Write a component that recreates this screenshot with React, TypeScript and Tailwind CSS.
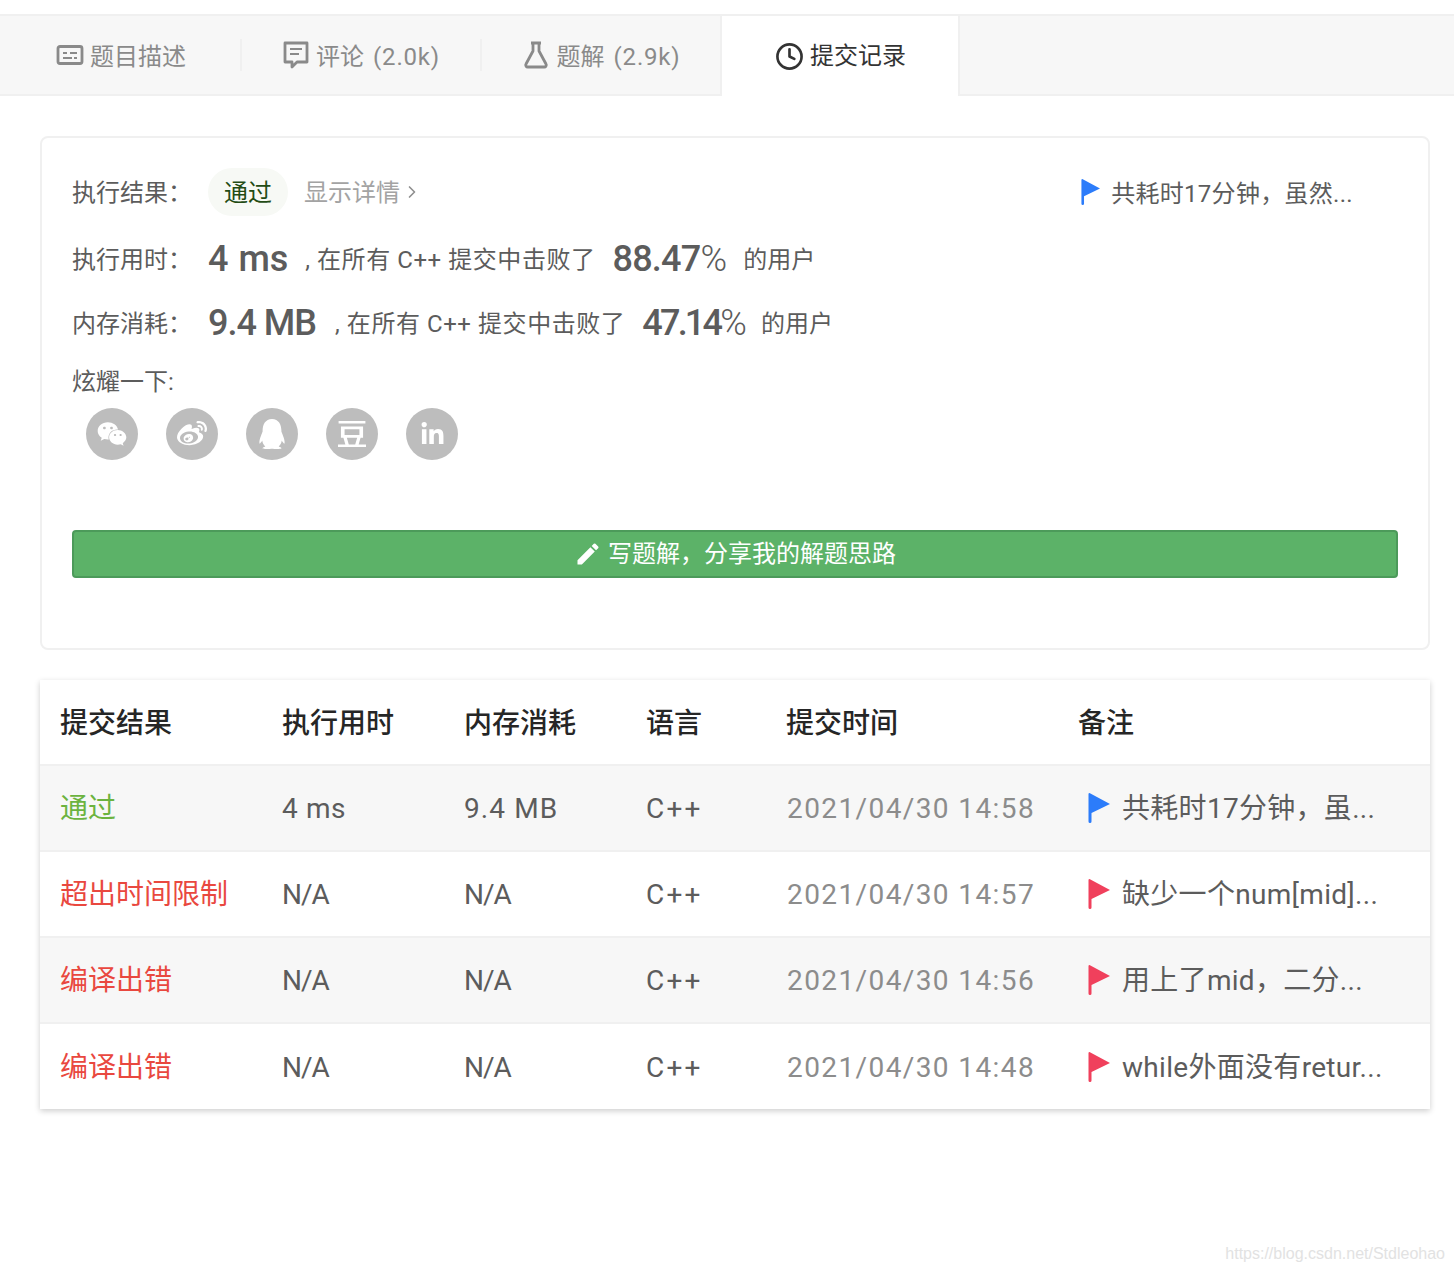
import { Clock, ChevronRight } from "lucide-react";
import { FaWeixin, FaWeibo, FaLinkedinIn } from "react-icons/fa";
import { SiDouban, SiTencentqq } from "react-icons/si";
import { MdEdit } from "react-icons/md";

const rows = [
  { status: "通过", color: "text-[#6cb33f]", time: "4 ms", mem: "9.4 MB", date: "2021/04/30 14:58", note: "共耗时17分钟，虽...", flag: "#2c7cfa" },
  { status: "超出时间限制", color: "text-[#e9483f]", time: "N/A", mem: "N/A", date: "2021/04/30 14:57", note: "缺少一个num[mid]...", flag: "#f0405c" },
  { status: "编译出错", color: "text-[#e9483f]", time: "N/A", mem: "N/A", date: "2021/04/30 14:56", note: "用上了mid，二分...", flag: "#f0405c" },
  { status: "编译出错", color: "text-[#e9483f]", time: "N/A", mem: "N/A", date: "2021/04/30 14:48", note: "while外面没有retur...", flag: "#f0405c" },
];

function Flag({ color, className }: { color: string; className: string }) {
  return (
    <svg viewBox="0 0 22 30" className={className}>
      <path d="M1.5 0 22 11 3.5 20V28.5a1.5 1.5 0 0 1-3 0V1A1 1 0 0 1 1.5 0Z" fill={color} />
    </svg>
  );
}

function Tab({ icon, label, count, width }: { icon: React.ReactNode; label: string; count?: string; width: string }) {
  return (
    <div className={`${width} h-full flex items-center`}>
      <div className="w-full h-[32px] flex items-center justify-center gap-[6px] text-[24px] text-[#8a8a8a] border-r-2 border-[#f0f0f0]">
        {icon}
        <span className="pt-[3px]">
          {label}
          {count && <span className="ml-[9px] tracking-[0.8px]">{count}</span>}
        </span>
      </div>
    </div>
  );
}

export default function App() {
  return (
    <div className="relative h-[1274px] bg-white pt-[14px] font-['Roboto','Noto_Sans_CJK_SC',sans-serif] text-[#5c5c5c]">
      <div className="h-[82px] flex bg-[#f7f7f7] border-y-2 border-[#f0f0f0]">
        <Tab
          width="w-[242px]"
          label="题目描述"
          icon={
            <svg viewBox="0 0 28 24" className="ml-[2px] w-[28px] h-[24px]" fill="none" stroke="#8a8a8a" strokeWidth="2.8">
              <rect x="2" y="3.5" width="24" height="17" rx="2" />
              <path d="M7 10h4M14 10h7M7 15h9M18 15h3" strokeWidth="2" />
            </svg>
          }
        />
        <Tab
          width="w-[240px]"
          label="评论"
          count="(2.0k)"
          icon={
            <svg viewBox="0 0 28 28" className="w-[28px] h-[28px]" fill="none" stroke="#8a8a8a" strokeWidth="2.8">
              <path d="M3 2h22v19H15l-5 5v-5H3Z" strokeLinejoin="round" />
              <path d="M8 8h12M8 13h9" strokeWidth="2.2" />
            </svg>
          }
        />
        <div className="w-[238px] h-full flex items-center justify-center gap-[8px] pl-[1px] text-[24px] text-[#8a8a8a]">
          <svg viewBox="0 0 26 28" className="w-[26px] h-[28px]" fill="none" stroke="#8a8a8a" strokeWidth="2.8">
            <path d="M8 2h10M10 2v8L3 23a2 2 0 0 0 2 3h16a2 2 0 0 0 2-3L16 10V2" strokeLinejoin="round" />
          </svg>
          <span className="pt-[3px]">
            题解<span className="ml-[9px] tracking-[0.8px]">(2.9k)</span>
          </span>
        </div>
        <div className="w-[240px] h-[82px] -mt-[2px] -mb-[2px] bg-white border-x-2 border-t-2 border-[#f0f0f0] flex items-center justify-center gap-[6px] pl-[1px] text-[24px] text-[#333]">
          <Clock className="w-[29px] h-[29px]" strokeWidth={2.2} />
          <span>提交记录</span>
        </div>
      </div>

      <div className="ml-[40px] mr-[24px] mt-[40px] h-[514px] border-2 border-[#f0f0f0] rounded-[8px] px-[30px] pt-[30px]">
        <div className="flex items-center h-[48px] text-[24px]">
          <span className="w-[136px] pt-[2px]">执行结果：</span>
          <span className="w-[80px] h-[48px] pt-[2px] rounded-full bg-[#f7f9f5] text-[#234b14] flex items-center justify-center">通过</span>
          <span className="ml-[16px] pt-[2px] text-[#a3a3a3]">显示详情</span>
          <ChevronRight className="ml-[2px] w-[20px] h-[20px] text-[#8f8f8f]" />
          <Flag color="#2c7cfa" className="ml-auto w-[19px] h-[26px]" />
          <span className="ml-[11px] mr-[45px] mt-[4px] tracking-[0.3px]">共耗时17分钟，虽然...</span>
        </div>
        <div className="flex items-center h-[48px] mt-[19px] text-[24px]">
          <span className="w-[136px] pt-[2px]">执行用时：</span>
          <span className="font-medium text-[36px] [word-spacing:1px]">4 ms</span>
          <span className="ml-[17px] pt-[2px] tracking-[0.55px]">, 在所有 C++ 提交中击败了</span>
          <span className="ml-[17px] font-medium text-[36px] tracking-[-0.8px]">
            88.47<span className="font-light">%</span>
          </span>
          <span className="ml-[17px] pt-[2px]">的用户</span>
        </div>
        <div className="flex items-center h-[48px] mt-[16px] text-[24px]">
          <span className="w-[136px] pt-[2px]">内存消耗：</span>
          <span className="font-medium text-[36px] tracking-[-1px]">9.4 MB</span>
          <span className="ml-[19px] pt-[2px] tracking-[0.55px]">, 在所有 C++ 提交中击败了</span>
          <span className="ml-[17px] font-medium text-[36px] tracking-[-2.8px]">
            47.14<span className="font-light">%</span>
          </span>
          <span className="ml-[17px] pt-[2px]">的用户</span>
        </div>
        <div className="mt-[17px] text-[24px] leading-[36px]">炫耀一下:</div>
        <div className="flex gap-[28px] pl-[14px] mt-[8px] text-white">
          <span className="w-[52px] h-[52px] rounded-full bg-[#bdbdbd] flex items-center justify-center"><FaWeixin size={30} /></span>
          <span className="w-[52px] h-[52px] rounded-full bg-[#bdbdbd] flex items-center justify-center"><FaWeibo size={30} /></span>
          <span className="w-[52px] h-[52px] rounded-full bg-[#bdbdbd] flex items-center justify-center"><SiTencentqq size={30} /></span>
          <span className="w-[52px] h-[52px] rounded-full bg-[#bdbdbd] flex items-center justify-center"><SiDouban size={28} /></span>
          <span className="w-[52px] h-[52px] rounded-full bg-[#bdbdbd] flex items-center justify-center"><FaLinkedinIn size={25} /></span>
        </div>
        <div className="mt-[70px] h-[48px] rounded-[4px] bg-[#5cb268] border-2 border-[#4c9a5a] flex items-center justify-center gap-[6px] text-[24px] text-white">
          <MdEdit size={28} />
          <span>写题解，分享我的解题思路</span>
        </div>
      </div>

      <div className="ml-[40px] mr-[24px] mt-[30px] shadow-[0_2px_6px_rgba(0,0,0,0.2)] text-[28px]">
        <div className="grid grid-cols-[222px_182px_182px_140px_292px_1fr] h-[86px] pt-[3px] items-center pl-[20px] font-medium text-[#262626] border-b-2 border-[#f0f0f0]">
          <span>提交结果</span>
          <span>执行用时</span>
          <span>内存消耗</span>
          <span>语言</span>
          <span>提交时间</span>
          <span>备注</span>
        </div>
        {rows.map((r, i) => (
          <div
            key={r.date}
            className={`grid grid-cols-[222px_182px_182px_140px_292px_1fr] pt-[2px] items-center pl-[20px] ${i % 2 === 0 ? "bg-[#f7f7f7]" : "bg-white"} ${i < 3 ? "h-[86px] border-b-2 border-[#f0f0f0]" : "h-[85px]"}`}
          >
            <span className={r.color}>{r.status}</span>
            <span className={r.time === "N/A" ? "tracking-[-1px]" : "tracking-[0.6px]"}>{r.time}</span>
            <span className={r.mem === "N/A" ? "tracking-[-1px]" : "tracking-[1.1px]"}>{r.mem}</span>
            <span className="tracking-[2.2px]">C++</span>
            <span className="text-[#8c8c8c] tracking-[1.4px] pl-px">{r.date}</span>
            <span className="flex items-center whitespace-nowrap">
              <Flag color={r.flag} className="ml-[10px] -mt-[2px] w-[22px] h-[30px]" />
              <span className="ml-[12px] tracking-[0.3px]">{r.note}</span>
            </span>
          </div>
        ))}
      </div>

      <div className="absolute right-[9px] bottom-[8px] text-[16px] text-[#e2e2e2] font-['Liberation_Sans',sans-serif]">
        https://blog.csdn.net/Stdleohao
      </div>
    </div>
  );
}
